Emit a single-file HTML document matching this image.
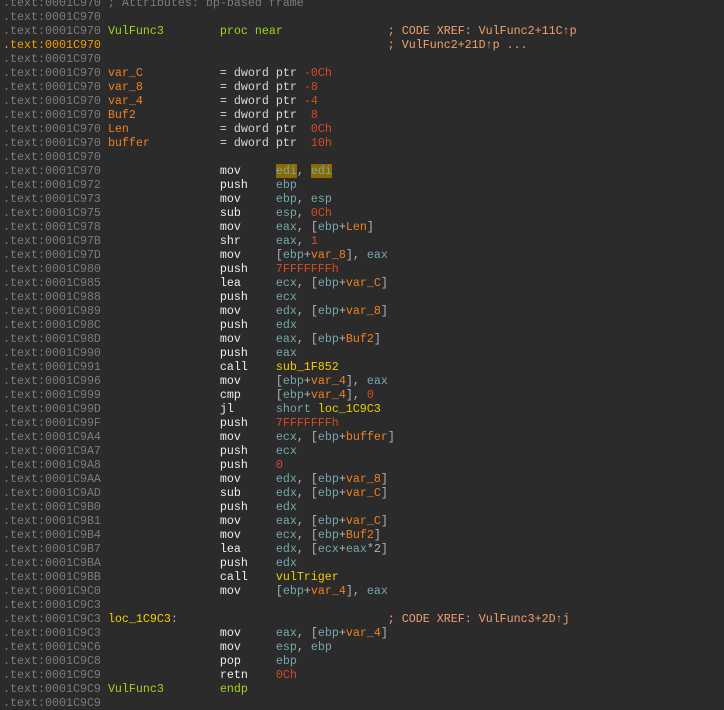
<!DOCTYPE html>
<html><head><meta charset="utf-8"><style>
html,body{margin:0;padding:0;background:#2b2b2b;width:724px;height:707px;overflow:hidden}
pre{position:absolute;left:3px;top:-4px;margin:0;font-family:"Liberation Mono",monospace;font-size:11.67px;line-height:14px;color:#d8d8d8;white-space:pre}
.a{color:#7c7c7c}.h{color:#f0a000}.g{color:#a0d41e}.v{color:#f08020}.m{color:#ececec}.r{color:#74a8ac}.n{color:#d84a28}.c{color:#f0a070}.y{color:#f0d000}.p{color:#b4b4b4}.s{color:#d8d8d8}
.hl{background:#8c6a00}
</style></head><body><pre><span class="a">.text:0001C970 ; Attributes: bp-based frame</span>
<span class="a">.text:0001C970</span>
<span class="a">.text:0001C970</span> <span class="g">VulFunc3        proc near</span>               <span class="c">; CODE XREF: VulFunc2+11C↑p</span>
<span class="h">.text:0001C970</span>                                         <span class="c">; VulFunc2+21D↑p ...</span>
<span class="a">.text:0001C970</span>
<span class="a">.text:0001C970</span> <span class="v">var_C</span>           <span class="s">= dword ptr</span> <span class="n">-0Ch</span>
<span class="a">.text:0001C970</span> <span class="v">var_8</span>           <span class="s">= dword ptr</span> <span class="n">-8</span>
<span class="a">.text:0001C970</span> <span class="v">var_4</span>           <span class="s">= dword ptr</span> <span class="n">-4</span>
<span class="a">.text:0001C970</span> <span class="v">Buf2</span>            <span class="s">= dword ptr</span>  <span class="n">8</span>
<span class="a">.text:0001C970</span> <span class="v">Len</span>             <span class="s">= dword ptr</span>  <span class="n">0Ch</span>
<span class="a">.text:0001C970</span> <span class="v">buffer</span>          <span class="s">= dword ptr</span>  <span class="n">10h</span>
<span class="a">.text:0001C970</span>
<span class="a">.text:0001C970</span>                 <span class="m">mov</span>     <span class="r hl">edi</span><span class="p">,</span> <span class="r hl">edi</span>
<span class="a">.text:0001C972</span>                 <span class="m">push</span>    <span class="r">ebp</span>
<span class="a">.text:0001C973</span>                 <span class="m">mov</span>     <span class="r">ebp</span><span class="p">,</span> <span class="r">esp</span>
<span class="a">.text:0001C975</span>                 <span class="m">sub</span>     <span class="r">esp</span><span class="p">,</span> <span class="n">0Ch</span>
<span class="a">.text:0001C978</span>                 <span class="m">mov</span>     <span class="r">eax</span><span class="p">, [</span><span class="r">ebp</span><span class="p">+</span><span class="v">Len</span><span class="p">]</span>
<span class="a">.text:0001C97B</span>                 <span class="m">shr</span>     <span class="r">eax</span><span class="p">,</span> <span class="n">1</span>
<span class="a">.text:0001C97D</span>                 <span class="m">mov</span>     <span class="p">[</span><span class="r">ebp</span><span class="p">+</span><span class="v">var_8</span><span class="p">],</span> <span class="r">eax</span>
<span class="a">.text:0001C980</span>                 <span class="m">push</span>    <span class="n">7FFFFFFFh</span>
<span class="a">.text:0001C985</span>                 <span class="m">lea</span>     <span class="r">ecx</span><span class="p">, [</span><span class="r">ebp</span><span class="p">+</span><span class="v">var_C</span><span class="p">]</span>
<span class="a">.text:0001C988</span>                 <span class="m">push</span>    <span class="r">ecx</span>
<span class="a">.text:0001C989</span>                 <span class="m">mov</span>     <span class="r">edx</span><span class="p">, [</span><span class="r">ebp</span><span class="p">+</span><span class="v">var_8</span><span class="p">]</span>
<span class="a">.text:0001C98C</span>                 <span class="m">push</span>    <span class="r">edx</span>
<span class="a">.text:0001C98D</span>                 <span class="m">mov</span>     <span class="r">eax</span><span class="p">, [</span><span class="r">ebp</span><span class="p">+</span><span class="v">Buf2</span><span class="p">]</span>
<span class="a">.text:0001C990</span>                 <span class="m">push</span>    <span class="r">eax</span>
<span class="a">.text:0001C991</span>                 <span class="m">call</span>    <span class="y">sub_1F852</span>
<span class="a">.text:0001C996</span>                 <span class="m">mov</span>     <span class="p">[</span><span class="r">ebp</span><span class="p">+</span><span class="v">var_4</span><span class="p">],</span> <span class="r">eax</span>
<span class="a">.text:0001C999</span>                 <span class="m">cmp</span>     <span class="p">[</span><span class="r">ebp</span><span class="p">+</span><span class="v">var_4</span><span class="p">],</span> <span class="n">0</span>
<span class="a">.text:0001C99D</span>                 <span class="m">jl</span>      <span class="r">short</span> <span class="y">loc_1C9C3</span>
<span class="a">.text:0001C99F</span>                 <span class="m">push</span>    <span class="n">7FFFFFFFh</span>
<span class="a">.text:0001C9A4</span>                 <span class="m">mov</span>     <span class="r">ecx</span><span class="p">, [</span><span class="r">ebp</span><span class="p">+</span><span class="v">buffer</span><span class="p">]</span>
<span class="a">.text:0001C9A7</span>                 <span class="m">push</span>    <span class="r">ecx</span>
<span class="a">.text:0001C9A8</span>                 <span class="m">push</span>    <span class="n">0</span>
<span class="a">.text:0001C9AA</span>                 <span class="m">mov</span>     <span class="r">edx</span><span class="p">, [</span><span class="r">ebp</span><span class="p">+</span><span class="v">var_8</span><span class="p">]</span>
<span class="a">.text:0001C9AD</span>                 <span class="m">sub</span>     <span class="r">edx</span><span class="p">, [</span><span class="r">ebp</span><span class="p">+</span><span class="v">var_C</span><span class="p">]</span>
<span class="a">.text:0001C9B0</span>                 <span class="m">push</span>    <span class="r">edx</span>
<span class="a">.text:0001C9B1</span>                 <span class="m">mov</span>     <span class="r">eax</span><span class="p">, [</span><span class="r">ebp</span><span class="p">+</span><span class="v">var_C</span><span class="p">]</span>
<span class="a">.text:0001C9B4</span>                 <span class="m">mov</span>     <span class="r">ecx</span><span class="p">, [</span><span class="r">ebp</span><span class="p">+</span><span class="v">Buf2</span><span class="p">]</span>
<span class="a">.text:0001C9B7</span>                 <span class="m">lea</span>     <span class="r">edx</span><span class="p">, [</span><span class="r">ecx</span><span class="p">+</span><span class="r">eax</span><span class="p">*2]</span>
<span class="a">.text:0001C9BA</span>                 <span class="m">push</span>    <span class="r">edx</span>
<span class="a">.text:0001C9BB</span>                 <span class="m">call</span>    <span class="y">vulTriger</span>
<span class="a">.text:0001C9C0</span>                 <span class="m">mov</span>     <span class="p">[</span><span class="r">ebp</span><span class="p">+</span><span class="v">var_4</span><span class="p">],</span> <span class="r">eax</span>
<span class="a">.text:0001C9C3</span>
<span class="a">.text:0001C9C3</span> <span class="y">loc_1C9C3</span><span class="p">:</span>                              <span class="c">; CODE XREF: VulFunc3+2D↑j</span>
<span class="a">.text:0001C9C3</span>                 <span class="m">mov</span>     <span class="r">eax</span><span class="p">, [</span><span class="r">ebp</span><span class="p">+</span><span class="v">var_4</span><span class="p">]</span>
<span class="a">.text:0001C9C6</span>                 <span class="m">mov</span>     <span class="r">esp</span><span class="p">,</span> <span class="r">ebp</span>
<span class="a">.text:0001C9C8</span>                 <span class="m">pop</span>     <span class="r">ebp</span>
<span class="a">.text:0001C9C9</span>                 <span class="m">retn</span>    <span class="n">0Ch</span>
<span class="a">.text:0001C9C9</span> <span class="g">VulFunc3        endp</span>
<span class="a">.text:0001C9C9</span>
</pre></body></html>
